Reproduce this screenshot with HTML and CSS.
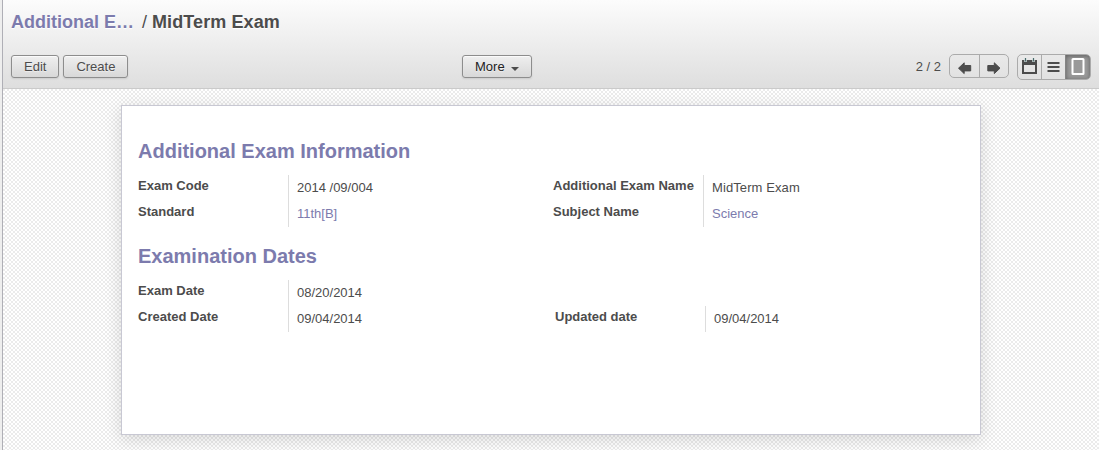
FILE: index.html
```html
<!DOCTYPE html>
<html lang="en">
<head>
<meta charset="utf-8">
<title>MidTerm Exam</title>
<link rel="stylesheet" href="styles.css">
</head>
<body>
<div class="app">
  <header class="header">
    <h2 class="breadcrumb"><a class="crumb">Additional E…</a><span class="slash">/</span><span class="current">MidTerm Exam</span></h2>
    <div class="toolbar">
      <div class="buttons"><button class="btn">Edit</button><button class="btn">Create</button></div>
      <div class="middle"><button class="btn more">More<span class="caret"></span></button></div>
      <div class="tools">
        <span class="pager">2 / 2</span>
        <div class="group nav">
          <span class="cell"><svg width="29" height="22" viewBox="0 0 29 22"><path d="M8.500 13.200 14.200 7.800V10.500H20.700V15.900H14.200V18.600Z" fill="#4c4c4c" stroke="#4c4c4c" stroke-linejoin="round"/></svg></span>
          <span class="cell"><svg width="28" height="22" viewBox="0 0 28 22"><path d="M20 13.200 14.300 7.800V10.500H7.800V15.900H14.300V18.600Z" fill="#4c4c4c" stroke="#4c4c4c" stroke-linejoin="round"/></svg></span>
        </div>
        <div class="group views">
          <span class="cell"><svg width="23" height="24" viewBox="0 0 23 24"><path d="M4 5H19V19H4ZM6 10V17H17V10Z" fill="#4c4c4c" fill-rule="evenodd"/><path d="M7.500 3v4M15.500 3v4" stroke="#dfeaea" stroke-width="2.400"/><path d="M7.500 3v3.500M15.500 3v3.500" stroke="#4c6868" stroke-width="1.200"/></svg></span>
          <span class="cell"><svg width="23" height="24" viewBox="0 0 23 24"><path d="M5.500 8H17.500M5.500 12H17.500M5.500 16H17.500" stroke="#4c4c4c" stroke-width="2"/></svg></span>
          <span class="cell active"><svg width="24" height="24" viewBox="0 0 24 24"><rect x="6.500" y="4" width="11" height="15" rx=".5" fill="none" stroke="#fff" stroke-width="2"/></svg></span>
        </div>
      </div>
    </div>
  </header>
  <main class="content">
    <section class="sheet">
      <h3 class="title">Additional Exam Information</h3>
      <div class="fields">
        <div class="labels"><span>Exam Code</span><span>Standard</span></div>
        <div class="values"><span>2014 /09/004</span><a>11th[B]</a></div>
        <div class="labels"><span>Additional Exam Name</span><span>Subject Name</span></div>
        <div class="values"><span class="name">MidTerm Exam</span><a>Science</a></div>
      </div>
      <h3 class="title">Examination Dates</h3>
      <div class="fields dates">
        <div class="labels"><span>Exam Date</span><span>Created Date</span></div>
        <div class="values"><span>08/20/2014</span><span>09/04/2014</span></div>
        <div class="labels"><span>Updated date</span></div>
        <div class="values"><span>09/04/2014</span></div>
      </div>
    </section>
  </main>
</div>
</body>
</html>
```
FILE: styles.css
```css
* { box-sizing: border-box; }
body {
  margin: 0;
  height: 450px;
  overflow: hidden;
  background: #eee;
  color: #4c4c4c;
  font: 13px/16px "Liberation Sans", Arial, sans-serif;
}
.app {
  display: flex;
  flex-direction: column;
  height: 450px;
  margin-left: 2px;
  border-left: 1px solid #afafb6;
}
.header {
  flex: none;
  height: 89px;
  padding: 10px 8px 0;
  border-bottom: 1px solid #cacaca;
  background: linear-gradient(#fcfcfc, #dedede);
}
.breadcrumb {
  margin: 0;
  height: 44px;
  font-size: 18px;
  line-height: 24px;
  text-shadow: 0 1px 1px #fff;
  white-space: nowrap;
}
.crumb, .title, .values a { color: #7c7bad; }
.slash { margin: 0 5px 0 8px; font-weight: normal; }
.current, .name { letter-spacing: .1px; }
.toolbar {
  display: grid;
  grid-template-columns: 451px 1fr auto;
}
.buttons { display: flex; gap: 4px; padding-top: 1px; }
.middle { padding-top: 1px; }
.btn {
  height: 23px;
  padding: 0 12px;
  border: 1px solid #8d8d8d;
  border-radius: 3px;
  background: linear-gradient(#efefef, #d8d8d8);
  box-shadow: 0 1px 2px rgba(0, 0, 0, .1), inset 0 1px 1px rgba(255, 255, 255, .8);
  color: #4c4c4c;
  font: 13px/21px "Liberation Sans", Arial, sans-serif;
  text-shadow: 0 1px 1px rgba(255, 255, 255, .5);
}
.more { display: flex; align-items: center; color: #222; }
.caret {
  margin: 5px 0 0 6px;
  border: 4px solid transparent;
  border-top-color: #4c4c4c;
  border-bottom: 0;
}
.tools { display: flex; align-items: flex-start; }
.pager { margin: 5px 8px 0 0; }
.group {
  display: flex;
  overflow: hidden;
  border: 1px solid #ababab;
  border-radius: 5px;
}
.nav { height: 24px; width: 60px; margin-right: 8px; }
.views { height: 26px; width: 74px; }
.cell { display: flex; flex: none; }
.cell + .cell { border-left: 1px solid #ababab; }
.cell.active {
  border-left-color: #848484;
  background: #999;
  box-shadow: inset 0 1px 4px rgba(0, 0, 0, .4);
}
.content {
  flex: 1;
  padding: 16px 118px 15px;
  background: repeating-conic-gradient(#fff 0 25%, #ebebeb 0 50%) 0 0 / 4px 4px;
}
.sheet {
  height: 330px;
  padding: 32px 16px 0;
  border: 1px solid #c8c8d3;
  background: #fff;
  box-shadow: 0 4px 16px rgba(0, 0, 0, .14);
}
.title {
  margin: 0 0 11px;
  font-size: 20px;
  line-height: 26px;
}
.fields {
  display: grid;
  grid-template-columns: 150px 265px 150px 1fr;
  margin-bottom: 16px;
}
.dates { grid-template-columns: 150px 267px 150px 1fr; align-items: end; }
.labels, .values { display: grid; grid-auto-rows: 26px; }
.labels { font-weight: bold; }
.labels > * { padding-top: 3px; white-space: nowrap; }
.values { padding-left: 8px; border-left: 1px solid #ddd; }
.values > * { padding-top: 5px; }
```
